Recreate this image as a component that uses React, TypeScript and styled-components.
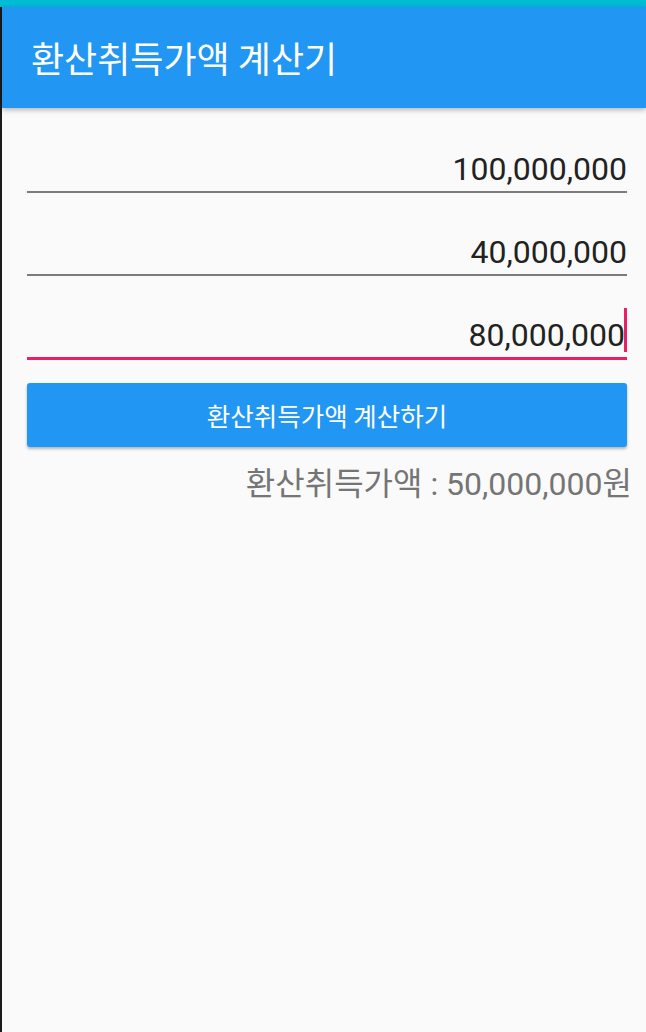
import React from "react";
import styled, { createGlobalStyle } from "styled-components";

const GlobalStyle = createGlobalStyle`
  html, body {
    margin: 0;
    padding: 0;
    background: #fafafa;
  }
  body {
    font-family: "Roboto", "Noto Sans CJK KR", sans-serif;
  }
  * { box-sizing: border-box; }
`;

const Screen = styled.div`
  width: 646px;
  height: 1032px;
  display: flex;
  flex-direction: column;
  background: #fafafa;
  overflow: hidden;
`;

const StatusBar = styled.div`
  height: 7px;
  flex: none;
  background: #00bcd4;
`;

const Body = styled.div`
  flex: 1;
  display: flex;
`;

const Edge = styled.div`
  width: 2px;
  flex: none;
  background: #1b1b1b;
`;

const Main = styled.div`
  flex: 1;
  display: flex;
  flex-direction: column;
  min-width: 0;
`;

const AppBar = styled.header`
  position: relative;
  z-index: 1;
  height: 101px;
  flex: none;
  display: flex;
  align-items: center;
  padding-left: 29px;
  background: #2196f3;
  box-shadow: 0 2px 5px rgba(0, 0, 0, 0.28);
`;

const Title = styled.h1`
  margin: 0;
  font-family: "Noto Sans CJK KR", sans-serif;
  font-weight: 400;
  font-size: 36px;
  line-height: 40px;
  color: #ffffff;
  padding-bottom: 2px;
`;

const Content = styled.div`
  display: flex;
  flex-direction: column;
  padding: 2px 19px 0 25px;
`;

const Field = styled.div<{ $focused?: boolean }>`
  padding: 39px 0 2px;
  line-height: 40px;
  font-size: 32px;
  color: #222222;
  text-align: right;
  white-space: nowrap;
  border-bottom: ${(p) => (p.$focused ? "3px solid #e91e63" : "2px solid #7b7b7b")};
  margin-bottom: ${(p) => (p.$focused ? "-1px" : "0")};
`;

const Caret = styled.span`
  display: inline-block;
  width: 3px;
  height: 44px;
  margin: -10px 0 0 -1px;
  vertical-align: -6px;
  background: #e91e63;
`;

const Button = styled.button`
  margin-top: 24px;
  height: 64px;
  border: none;
  border-radius: 3px;
  background: #2196f3;
  color: #ffffff;
  font-family: "Noto Sans CJK KR", sans-serif;
  font-size: 25.5px;
  font-weight: 400;
  padding: 0 0 2px;
  box-shadow: 0 2px 3px rgba(0, 0, 0, 0.28);
  cursor: pointer;
`;

const Result = styled.div`
  margin-top: 14px;
  margin-right: -5px;
  line-height: 40px;
  font-size: 32px;
  color: #757575;
  text-align: right;
  white-space: nowrap;
`;

const Hangul = styled.span`
  font-family: "Noto Sans CJK KR", sans-serif;
  font-size: 32px;
`;

export default function App() {
  const values = ["100,000,000", "40,000,000", "80,000,000"];
  return (
    <>
      <GlobalStyle />
      <Screen>
        <StatusBar />
        <Body>
          <Edge />
          <Main>
            <AppBar>
              <Title>환산취득가액 계산기</Title>
            </AppBar>
            <Content>
              {values.map((v, i) => {
                const focused = i === values.length - 1;
                return (
                  <Field key={v} $focused={focused}>
                    {v}
                    {focused && <Caret />}
                  </Field>
                );
              })}
              <Button type="button">환산취득가액 계산하기</Button>
              <Result>
                <Hangul>환산취득가액</Hangul> : 50,000,000<Hangul>원</Hangul>
              </Result>
            </Content>
          </Main>
        </Body>
      </Screen>
    </>
  );
}
